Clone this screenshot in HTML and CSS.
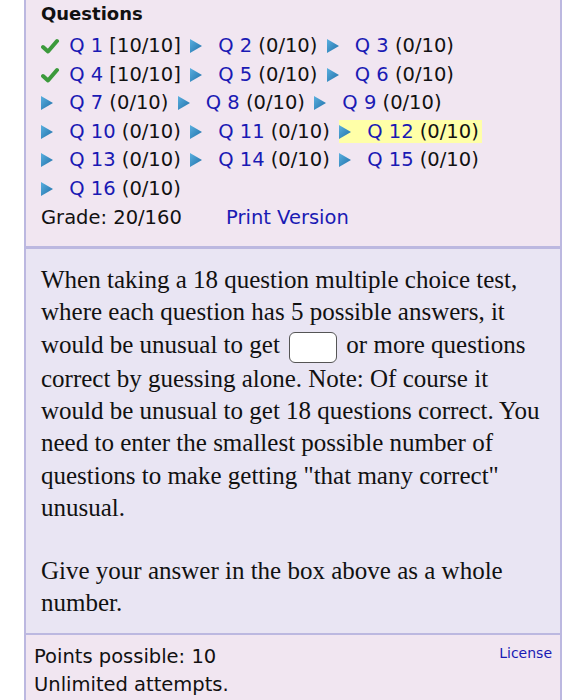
FILE: index.html
```html
<!DOCTYPE html>
<html lang="en">
<head>
    <meta charset="UTF-8">
    <meta name="viewport" content="width=device-width, initial-scale=1.0">
    <title>Assessment</title>
    <link rel="stylesheet" href="styles.css">
</head>
<body>
    <div class="assess">
        <div class="questions-panel">
            <div class="panel-title">Questions</div>
            <div class="q-list">
                <span class="q-item"><svg class="ico" viewBox="0 0 22 16"><path d="M2 9 L7 13.5 L16 3" fill="none" stroke="#3c9a3c" stroke-width="4" stroke-linecap="round" stroke-linejoin="round"/></svg> <a href="#">Q 1</a> [10/10]</span>
                <span class="q-item"><svg class="ico" viewBox="0 0 22 16"><defs><linearGradient id="tri" x1="0" y1="0" x2="1" y2="1"><stop offset="0" stop-color="#5ab0e0"/><stop offset="1" stop-color="#1f6fa8"/></linearGradient></defs><path d="M0 1 L12 8 L0 15 Z" fill="url(#tri)"/></svg> <a href="#">Q 2</a> (0/10)</span>
                <span class="q-item"><svg class="ico" viewBox="0 0 22 16"><path d="M0 1 L12 8 L0 15 Z" fill="url(#tri)"/></svg> <a href="#">Q 3</a> (0/10)</span>
                <br>
                <span class="q-item"><svg class="ico" viewBox="0 0 22 16"><path d="M2 9 L7 13.5 L16 3" fill="none" stroke="#3c9a3c" stroke-width="4" stroke-linecap="round" stroke-linejoin="round"/></svg> <a href="#">Q 4</a> [10/10]</span>
                <span class="q-item"><svg class="ico" viewBox="0 0 22 16"><path d="M0 1 L12 8 L0 15 Z" fill="url(#tri)"/></svg> <a href="#">Q 5</a> (0/10)</span>
                <span class="q-item"><svg class="ico" viewBox="0 0 22 16"><path d="M0 1 L12 8 L0 15 Z" fill="url(#tri)"/></svg> <a href="#">Q 6</a> (0/10)</span>
                <br>
                <span class="q-item"><svg class="ico" viewBox="0 0 22 16"><path d="M0 1 L12 8 L0 15 Z" fill="url(#tri)"/></svg> <a href="#">Q 7</a> (0/10)</span>
                <span class="q-item"><svg class="ico" viewBox="0 0 22 16"><path d="M0 1 L12 8 L0 15 Z" fill="url(#tri)"/></svg> <a href="#">Q 8</a> (0/10)</span>
                <span class="q-item"><svg class="ico" viewBox="0 0 22 16"><path d="M0 1 L12 8 L0 15 Z" fill="url(#tri)"/></svg> <a href="#">Q 9</a> (0/10)</span>
                <br>
                <span class="q-item"><svg class="ico" viewBox="0 0 22 16"><path d="M0 1 L12 8 L0 15 Z" fill="url(#tri)"/></svg> <a href="#">Q 10</a> (0/10)</span>
                <span class="q-item"><svg class="ico" viewBox="0 0 22 16"><path d="M0 1 L12 8 L0 15 Z" fill="url(#tri)"/></svg> <a href="#">Q 11</a> (0/10)</span>
                <span class="q-item current"><svg class="ico" viewBox="0 0 22 16"><path d="M0 1 L12 8 L0 15 Z" fill="url(#tri)"/></svg> <a href="#">Q 12</a> (0/10)</span>
                <br>
                <span class="q-item"><svg class="ico" viewBox="0 0 22 16"><path d="M0 1 L12 8 L0 15 Z" fill="url(#tri)"/></svg> <a href="#">Q 13</a> (0/10)</span>
                <span class="q-item"><svg class="ico" viewBox="0 0 22 16"><path d="M0 1 L12 8 L0 15 Z" fill="url(#tri)"/></svg> <a href="#">Q 14</a> (0/10)</span>
                <span class="q-item"><svg class="ico" viewBox="0 0 22 16"><path d="M0 1 L12 8 L0 15 Z" fill="url(#tri)"/></svg> <a href="#">Q 15</a> (0/10)</span>
                <br>
                <span class="q-item"><svg class="ico" viewBox="0 0 22 16"><path d="M0 1 L12 8 L0 15 Z" fill="url(#tri)"/></svg> <a href="#">Q 16</a> (0/10)</span>
            </div>
            <div class="grade-row">
                <span>Grade: 20/160</span>
                <a href="#" class="print-link">Print Version</a>
            </div>
        </div>

        <div class="question-body">
            <p>When taking a 18 question multiple choice test, where each question has 5 possible answers, it would be unusual to get <input type="text" class="answer-box"> or more questions correct by guessing alone. Note: Of course it would be unusual to get 18 questions correct. You need to enter the smallest possible number of questions to make getting "that many correct" unusual.</p>
            <p>Give your answer in the box above as a whole number.</p>
        </div>

        <div class="question-footer">
            <a href="#" class="license-link">License</a>
            <div>Points possible: 10</div>
            <div>Unlimited attempts.</div>
        </div>
    </div>
</body>
</html>
```

FILE: styles.css
```css
:root {
    --panel-pink: #f1e6f1;
    --panel-lavender: #e9e5f3;
    --border-color: #bcb8e0;
    --link-color: #1a1ab4;
}

body {
    margin: 0;
    padding: 0;
    background-color: #ffffff;
    color: #111;
    font-family: "DejaVu Sans", Verdana, sans-serif;
}

.assess {
    margin-left: 24px;
    width: 534px;
    border-left: 2px solid var(--border-color);
    border-right: 2px solid var(--border-color);
}

a {
    color: var(--link-color);
    text-decoration: none;
}

.questions-panel {
    background-color: var(--panel-pink);
    padding: 0 15px 14px 15px;
    border-bottom: 3px solid var(--border-color);
    font-size: 19.5px;
}

.panel-title {
    font-weight: bold;
    font-size: 18px;
    line-height: 28px;
    padding-bottom: 4px;
}

.q-list {
    line-height: 28.5px;
}

.q-item {
    padding-right: 3px;
}

.q-item.current {
    background-color: #ffffa8;
}

.ico {
    width: 22px;
    height: 16px;
    vertical-align: -2px;
}

.grade-row {
    line-height: 29px;
}

.print-link {
    margin-left: 38px;
}

.question-body {
    background-color: var(--panel-lavender);
    padding: 15px 15px 14px 15px;
    border-bottom: 2px solid var(--border-color);
    font-family: "Liberation Serif", "Times New Roman", serif;
    font-size: 25px;
    line-height: 32.4px;
}

.question-body p {
    margin: 0 0 30px 0;
}

.question-body p:last-child {
    margin-bottom: 0;
}

.answer-box {
    width: 48px;
    height: 31px;
    margin: 0 3px;
    padding: 0;
    border: 1.5px solid #555;
    border-radius: 6px;
    background: #fff;
    vertical-align: middle;
    box-sizing: border-box;
}

.question-footer {
    background-color: var(--panel-pink);
    padding: 8px 8px 10px 8px;
    font-size: 19.5px;
    line-height: 28px;
}

.license-link {
    float: right;
    font-size: 14px;
    line-height: 20px;
}
```
